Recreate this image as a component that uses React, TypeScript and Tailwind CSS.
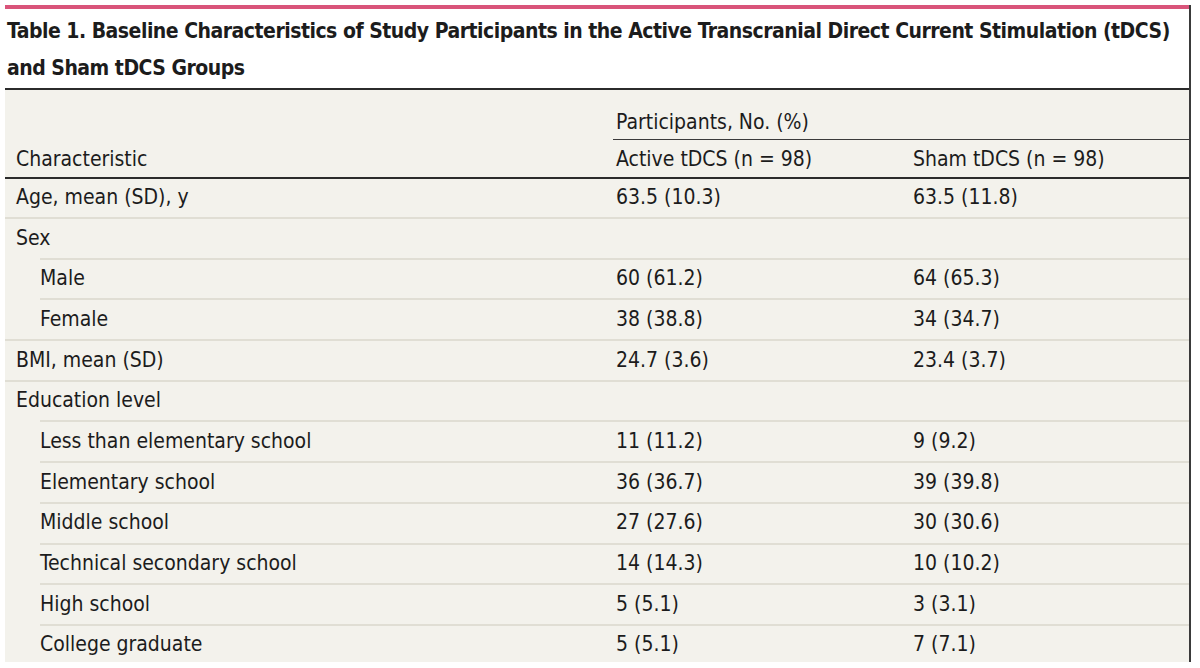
const rows: { label: string; active: string; sham: string; indent?: boolean }[] = [
  { label: "Age, mean (SD), y", active: "63.5 (10.3)", sham: "63.5 (11.8)" },
  { label: "Sex", active: "", sham: "" },
  { label: "Male", active: "60 (61.2)", sham: "64 (65.3)", indent: true },
  { label: "Female", active: "38 (38.8)", sham: "34 (34.7)", indent: true },
  { label: "BMI, mean (SD)", active: "24.7 (3.6)", sham: "23.4 (3.7)" },
  { label: "Education level", active: "", sham: "" },
  { label: "Less than elementary school", active: "11 (11.2)", sham: "9 (9.2)", indent: true },
  { label: "Elementary school", active: "36 (36.7)", sham: "39 (39.8)", indent: true },
  { label: "Middle school", active: "27 (27.6)", sham: "30 (30.6)", indent: true },
  { label: "Technical secondary school", active: "14 (14.3)", sham: "10 (10.2)", indent: true },
  { label: "High school", active: "5 (5.1)", sham: "3 (3.1)", indent: true },
  { label: "College graduate", active: "5 (5.1)", sham: "7 (7.1)", indent: true },
];

const App = () => {
  return (
    <div
      className="w-[1200px] h-[668px] bg-white pt-[5px] pl-[5px] overflow-hidden text-[#1c1c1c]"
      style={{ fontFamily: '"DejaVu Sans Condensed", "Liberation Sans", sans-serif' }}
    >
      <div className="w-[1186px] h-[657px] border-r-2 border-[#3a3a3a] flex flex-col overflow-hidden">
        {/* Title */}
        <div className="h-[4px] bg-[#d9547a] shrink-0" />
        <div className="bg-white px-[2px] pt-[4px] h-[81px] shrink-0 border-b-2 border-[#2b2b2b]">
          <h1 className="text-[21px] leading-[37px] font-bold tracking-[-0.5px] whitespace-nowrap">
            Table 1. Baseline Characteristics of Study Participants in the Active Transcranial Direct Current Stimulation (tDCS)
            <br />
            and Sham tDCS Groups
          </h1>
        </div>

        {/* Table */}
        <div className="bg-[#f3f2ec] flex-1 text-[21px]">
          <div className="grid grid-cols-[608px_1fr] h-[45px]">
            <div />
            <div className="border-b-[1.5px] border-[#3a3a3a] h-full flex items-center pl-[3px] pt-[17px]">
              Participants, No. (%)
            </div>
          </div>
          <div className="grid grid-cols-[600px_297px_1fr] h-[44px] pt-[7px] items-center border-b-2 border-[#2b2b2b]">
            <div className="pl-[11px]">Characteristic</div>
            <div className="pl-[11px]">Active tDCS (n = 98)</div>
            <div className="pl-[11px]">Sham tDCS (n = 98)</div>
          </div>
          {rows.map((r, i) =>
            r.indent ? (
              <div
                key={i}
                className="ml-[35px] grid grid-cols-[565px_297px_1fr] h-[40.7px] items-center border-t-2 border-[#e0ded4]"
              >
                <div>{r.label}</div>
                <div className="pl-[11px]">{r.active}</div>
                <div className="pl-[11px]">{r.sham}</div>
              </div>
            ) : (
              <div
                key={i}
                className={`grid grid-cols-[600px_297px_1fr] items-center ${i === 0 ? "h-[38px]" : "h-[40.7px] border-t-2 border-[#e0ded4]"}`}
              >
                <div className="pl-[11px]">{r.label}</div>
                <div className="pl-[11px]">{r.active}</div>
                <div className="pl-[11px]">{r.sham}</div>
              </div>
            )
          )}
        </div>
      </div>
    </div>
  );
};

export default App;
